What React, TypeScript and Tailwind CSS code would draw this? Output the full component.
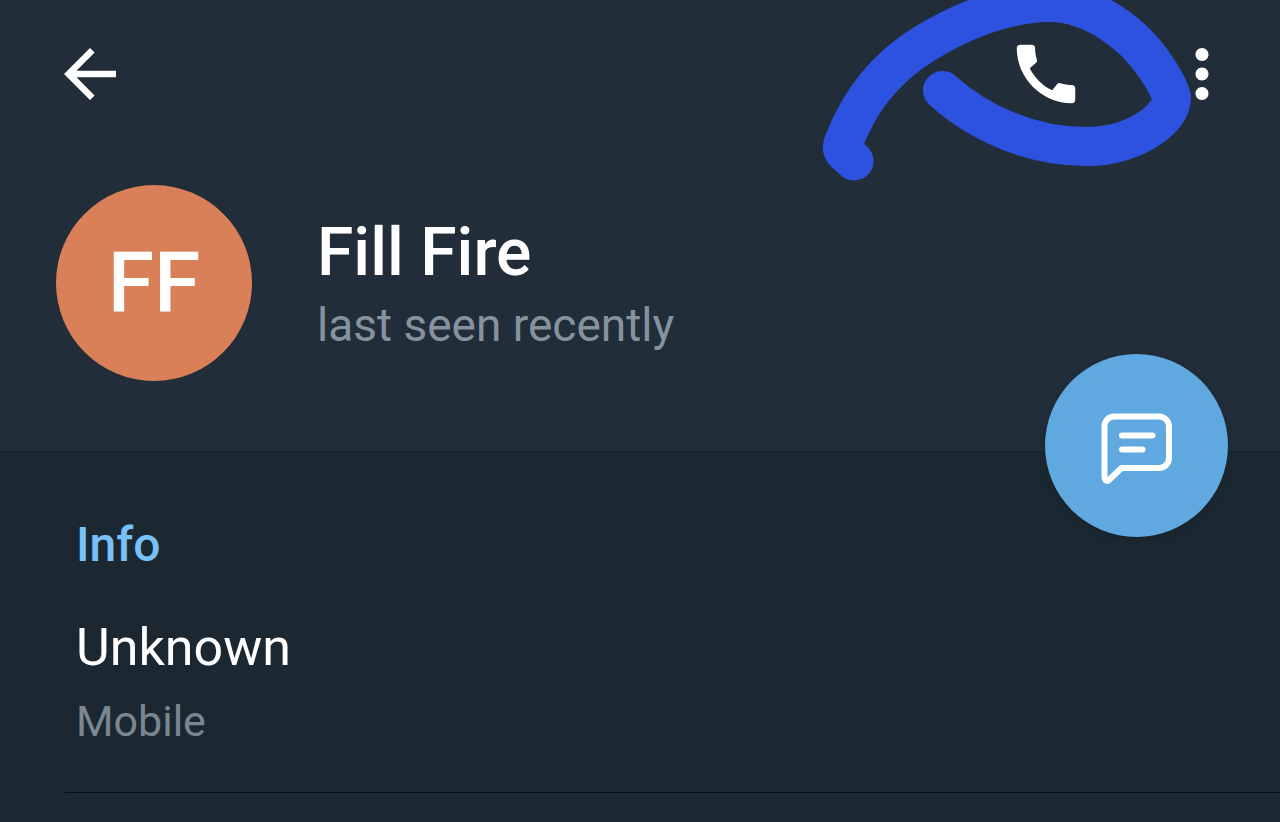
import { MdArrowBack, MdCall, MdMoreVert } from "react-icons/md";

function MessageIcon() {
  return (
    <svg
      viewBox="0 0 72 72"
      className="mt-1 size-[72px]"
      fill="none"
      stroke="currentColor"
      strokeWidth="6"
      strokeLinecap="round"
      strokeLinejoin="round"
      aria-hidden="true"
    >
      <path d="M13 4.500H58A10 10 0 0 1 68 14.500V46A10 10 0 0 1 58 56H20.500L8.500 67.500Q6.500 69.500 4.800 68.500Q3.500 67.500 3.500 65V14A9.500 9.500 0 0 1 13 4.500Z" />
      <path d="M21 23.500H51.500M21 37.500H41.500" />
    </svg>
  );
}

// Marker stroke drawn around the call button
function Scribble() {
  return (
    <svg
      viewBox="0 0 480 200"
      className="pointer-events-none absolute top-0 right-0 h-[200px] w-[480px]"
      fill="none"
      stroke="#2d52e0"
      strokeWidth="39"
      strokeLinecap="round"
      strokeLinejoin="round"
      aria-hidden="true"
    >
      <path d="M142.500 90.500C180 124 232 146.500 287 146.500C332 146.500 371.500 120 371.500 98C371.500 92 361 74 355 66C334 34 292 2.500 249 2.500C206 2.500 160 22 124 44C82 70 58 104 43 144Q41 149 45 153L54 161" />
    </svg>
  );
}

function ProfileHeader() {
  return (
    <header className="relative border-b-2 border-[#1a242d] bg-[#212d38] pt-[35px] pb-[70px]">
      <div className="flex items-center justify-between pr-[39px] pl-[51px]">
        <button type="button" aria-label="Back">
          <MdArrowBack className="size-[78px]" />
        </button>
        <div className="flex gap-[78px]">
          <button type="button" aria-label="Call">
            <MdCall className="size-[78px]" />
          </button>
          <button type="button" aria-label="More options">
            <MdMoreVert className="size-[78px]" />
          </button>
        </div>
      </div>

      <div className="mt-[72px] flex items-center gap-[65px] pl-14">
        <div className="flex size-[196px] shrink-0 items-center justify-center rounded-full bg-[#da8059] text-[84px] leading-none font-medium">
          FF
        </div>
        <div>
          <h1 className="text-[66px] leading-[80px] font-medium">Fill Fire</h1>
          <p className="mt-1 text-[46px] leading-[56px] text-[#86939f]">last seen recently</p>
        </div>
      </div>

      <Scribble />

      <button
        type="button"
        aria-label="Send message"
        className="absolute right-[52px] -bottom-[86px] flex size-[183px] items-center justify-center rounded-full bg-[#5fa9e0] shadow-[0_2px_6px_rgba(0,0,0,0.2)]"
      >
        <MessageIcon />
      </button>
    </header>
  );
}

function InfoSection() {
  return (
    <section className="pt-16">
      <h2 className="pl-[76px] text-[48px] leading-[56px] font-medium text-[#79c0f8]">Info</h2>
      <dl className="mt-[43px] flex flex-col-reverse gap-[13px] pl-[76px]">
        <dt className="text-[43px] leading-[56px] text-[#7a8791]">Mobile</dt>
        <dd className="text-[52px] leading-[64px]">Unknown</dd>
      </dl>
      <hr className="mt-[43px] ml-[65px] border-t border-[#0a1117]" />
    </section>
  );
}

export default function App() {
  return (
    <main className="min-h-screen bg-[#1c2831] font-['Roboto',sans-serif] text-white">
      <ProfileHeader />
      <InfoSection />
    </main>
  );
}
